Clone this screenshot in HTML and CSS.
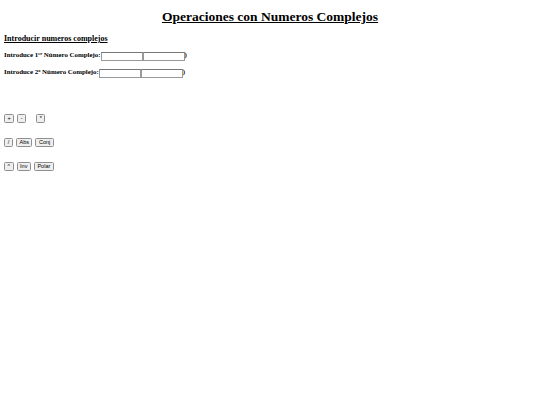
FILE: index.html
```
<!DOCTYPE html>
<html>
<head>
<meta charset="utf-8">
<link rel="stylesheet" href="styles.css">
</head>
<body>
<h1 class="title">Operaciones con Numeros Complejos</h1>
<h3 class="subtitle">Introducir numeros complejos</h3>
<div class="row">Introduce 1<sup>er</sup> Número Complejo:<input class="field" type="text"><input class="field" type="text">)</div>
<div class="row">Introduce 2<sup>o</sup> Número Complejo:<input class="field" type="text"><input class="field" type="text">)</div>
<div class="buttons first">
  <button class="btn">+</button><button class="btn">-</button><button class="btn gap">*</button>
</div>
<div class="buttons">
  <button class="btn">/</button><button class="btn">Abs</button><button class="btn">Conj</button>
</div>
<div class="buttons">
  <button class="btn">^</button><button class="btn">Inv</button><button class="btn">Polar</button>
</div>
</body>
</html>
```
FILE: styles.css
```
body {
  margin: 0;
  padding: 0 4px;
  font-family: "Liberation Serif", serif;
  color: #000;
  background: #fff;
}
.title {
  margin: 8px 0 0;
  font-size: 13.5px;
  line-height: 17px;
  font-weight: bold;
  text-align: center;
  text-decoration: underline;
}
.subtitle {
  margin: 9px 0 0;
  font-size: 8px;
  line-height: 10px;
  font-weight: bold;
  text-decoration: underline;
}
.row {
  margin-top: 6px;
  font-size: 6.9px;
  font-weight: bold;
  line-height: 10px;
  height: 10px;
  white-space: nowrap;
}
.row + .row {
  margin-top: 7px;
}
sup {
  font-size: 4.5px;
  line-height: 0;
  vertical-align: 2.5px;
}
.field {
  width: 42px;
  height: 9px;
  box-sizing: border-box;
  margin: 0;
  padding: 0;
  border: 1px solid #999;
  border-top-color: #777;
  font-size: 5px;
  vertical-align: -1px;
}
.buttons {
  display: flex;
  gap: 3px;
  margin-top: 15px;
}
.buttons.first {
  margin-top: 37px;
}
.btn {
  height: 9px;
  min-width: 9px;
  box-sizing: border-box;
  padding: 0 2.5px;
  margin: 0;
  font-family: "Liberation Sans", sans-serif;
  font-size: 5.5px;
  line-height: 7px;
  background: #efefef;
  border: 1px solid #8f8f8f;
  border-radius: 1.5px;
  color: #000;
}
.btn.gap {
  margin-left: 7px;
}
```
